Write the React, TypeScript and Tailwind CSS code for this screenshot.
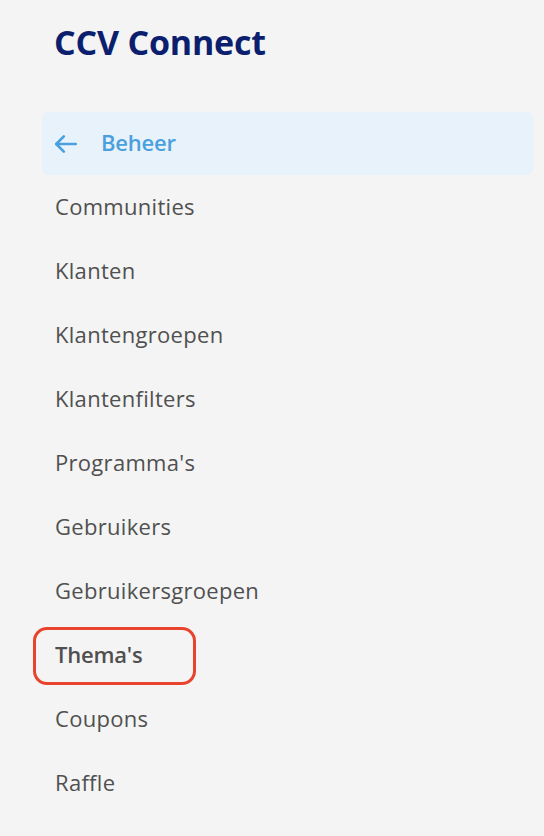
import React from "react"

const items = [
    "Communities",
    "Klanten",
    "Klantengroepen",
    "Klantenfilters",
    "Programma's",
    "Gebruikers",
    "Gebruikersgroepen",
    "Thema's",
    "Coupons",
    "Raffle",
]

function ArrowLeft() {
    return (
        <svg width="26" height="26" viewBox="0 0 24 24" fill="none" stroke="currentColor" strokeWidth="2.4" strokeLinecap="round" strokeLinejoin="round">
            <path d="M21 12H3" />
            <path d="M10 5l-7 7 7 7" />
        </svg>
    )
}

export default function App() {
    return (
        <div
            className="w-[544px] h-[836px] bg-[#f4f4f4] overflow-hidden"
            style={{ fontFamily: '"Open Sans", sans-serif' }}
        >
            <div className="pl-[54px] pt-[20px] h-[112px]">
                <h1 className="text-[34px] leading-[44px] font-bold text-[#0c1f6e] tracking-[-0.2px]">CCV Connect</h1>
            </div>
            <nav className="flex flex-col pl-[42px] pr-[11px]">
                <a className="flex items-center h-[63px] rounded-md bg-[#e7f2fa] text-[#4aa0de] pl-[11px] mb-[1px]">
                    <ArrowLeft />
                    <span className="ml-[22px] text-[22px] font-semibold tracking-[-0.2px] pb-[2px]">Beheer</span>
                </a>
                {items.map((item) => (
                    <div key={item} className="h-[64px] flex items-center pb-[3px]">
                        {item === "Thema's" ? (
                            <span className="-ml-[9px] mt-[3px] h-[58px] w-[163px] flex items-center pl-[19px] pb-[3px] border-[3px] border-[#e8432c] rounded-[14px] text-[22px] font-semibold text-[#4f4f4f] tracking-[-0.2px]">
                                {item}
                            </span>
                        ) : (
                            <span className="pl-[13px] text-[22px] text-[#505050] tracking-[0.3px]">{item}</span>
                        )}
                    </div>
                ))}
            </nav>
        </div>
    )
}
